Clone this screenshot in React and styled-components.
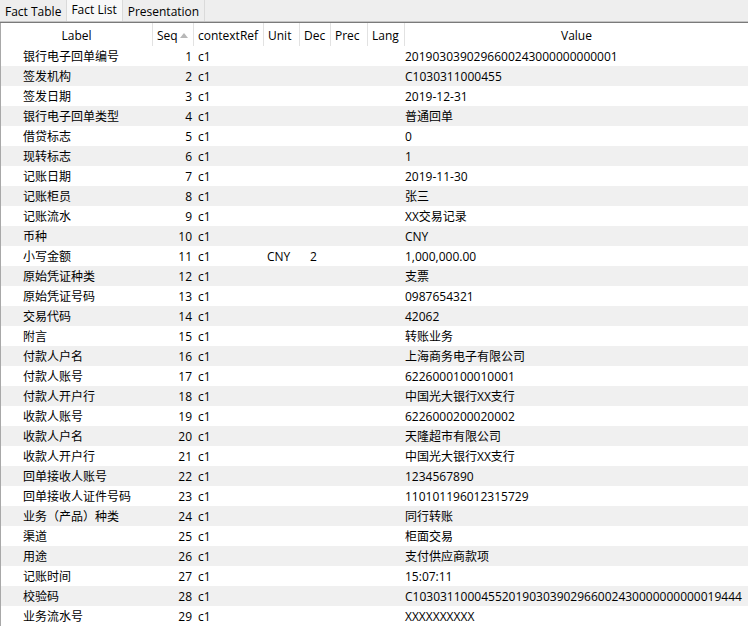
import React from 'react'
import styled, { createGlobalStyle } from 'styled-components'

const GlobalStyle = createGlobalStyle`
    html, body {
        margin: 0;
        padding: 0;
        background: #ffffff;
    }
    body {
        font-family: "Open Sans", "Noto Sans CJK SC", sans-serif;
        font-size: 12px;
        color: #000000;
    }
`

const COLS = '152px 41px 70px 36px 31px 37px 37px 1fr'

const Window = styled.div`
    width: 748px;
    height: 626px;
    overflow: hidden;
    display: flex;
    flex-direction: column;
    background: #ffffff;
`

const TabBar = styled.div`
    height: 21px;
    display: flex;
    align-items: stretch;
    background: #eeeeee;
    border-bottom: 1px solid #c4c4c4;
    box-shadow: 0 1px 0 #7a7a7a;
    margin-bottom: 1px;
`

const Tab = styled.div`
    display: flex;
    align-items: flex-start;
    padding: ${p => (p.$active ? '1px 5px 0 4px' : '3px 5px 0 5px')};
    background: ${p => (p.$active ? '#f8f8f8' : '#eeeeee')};
    border-right: 1px solid #dadada;
    line-height: 17px;
    white-space: nowrap;
`

const Table = styled.div`
    flex: 1;
    display: flex;
    flex-direction: column;
    border-left: 1px solid #a8a8a8;
`

const HeaderRow = styled.div`
    display: grid;
    grid-template-columns: ${COLS};
    height: 23px;
    background: #ffffff;
`

const HeadCell = styled.div`
    display: flex;
    align-items: center;
    justify-content: ${p => (p.$center ? 'center' : 'flex-start')};
    padding-left: ${p => (p.$center ? '0' : '4px')};
    padding-top: 2px;
    border-right: ${p => (p.$last ? 'none' : '1px solid #e2e2e2')};
    white-space: nowrap;
`

const SortArrow = styled.span`
    display: inline-block;
    width: 0;
    height: 0;
    margin-left: 2px;
    margin-bottom: 1px;
    border-left: 4px solid transparent;
    border-right: 4px solid transparent;
    border-bottom: 5px solid #b8b8b8;
`

const Row = styled.div`
    display: grid;
    grid-template-columns: ${COLS};
    height: 20px;
    box-sizing: border-box;
    padding-top: 1px;
    line-height: 19px;
    background: ${p => (p.$alt ? '#f0f0f0' : '#ffffff')};
`

const Cell = styled.div`
    white-space: nowrap;
    overflow: visible;
    text-align: ${p => p.$align || 'left'};
    padding-left: ${p => p.$pl ?? 4}px;
    padding-right: ${p => p.$pr ?? 0}px;
`

const facts = [
    ['银行电子回单编号', '2019030390296600243000000000001'],
    ['签发机构', 'C1030311000455'],
    ['签发日期', '2019-12-31'],
    ['银行电子回单类型', '普通回单'],
    ['借贷标志', '0'],
    ['现转标志', '1'],
    ['记账日期', '2019-11-30'],
    ['记账柜员', '张三'],
    ['记账流水', 'XX交易记录'],
    ['币种', 'CNY'],
    ['小写金额', '1,000,000.00', 'CNY', '2'],
    ['原始凭证种类', '支票'],
    ['原始凭证号码', '0987654321'],
    ['交易代码', '42062'],
    ['附言', '转账业务'],
    ['付款人户名', '上海商务电子有限公司'],
    ['付款人账号', '6226000100010001'],
    ['付款人开户行', '中国光大银行XX支行'],
    ['收款人账号', '6226000200020002'],
    ['收款人户名', '天隆超市有限公司'],
    ['收款人开户行', '中国光大银行XX支行'],
    ['回单接收人账号', '1234567890'],
    ['回单接收人证件号码', '110101196012315729'],
    ['业务（产品）种类', '同行转账'],
    ['渠道', '柜面交易'],
    ['用途', '支付供应商款项'],
    ['记账时间', '15:07:11'],
    ['校验码', 'C103031100045520190303902966002430000000000019444'],
    ['业务流水号', 'XXXXXXXXXX'],
]

const App = () => {
    return (
        <>
            <GlobalStyle />
            <Window>
                <TabBar>
                    <Tab>Fact Table</Tab>
                    <Tab $active>Fact List</Tab>
                    <Tab>Presentation</Tab>
                </TabBar>
                <Table>
                    <HeaderRow>
                        <HeadCell $center>Label</HeadCell>
                        <HeadCell>Seq<SortArrow /></HeadCell>
                        <HeadCell>contextRef</HeadCell>
                        <HeadCell>Unit</HeadCell>
                        <HeadCell>Dec</HeadCell>
                        <HeadCell>Prec</HeadCell>
                        <HeadCell>Lang</HeadCell>
                        <HeadCell $center $last>Value</HeadCell>
                    </HeaderRow>
                    {facts.map(([label, value, unit, dec], i) => (
                        <Row key={i} $alt={i % 2 === 1}>
                            <Cell $pl={22}>{label}</Cell>
                            <Cell $align="right" $pl={0} $pr={2}>{i + 1}</Cell>
                            <Cell $pl={4}>c1</Cell>
                            <Cell $pl={3}>{unit || ''}</Cell>
                            <Cell $pl={10}>{dec || ''}</Cell>
                            <Cell />
                            <Cell />
                            <Cell $pl={0}>{value}</Cell>
                        </Row>
                    ))}
                </Table>
            </Window>
        </>
    )
}

export default App
